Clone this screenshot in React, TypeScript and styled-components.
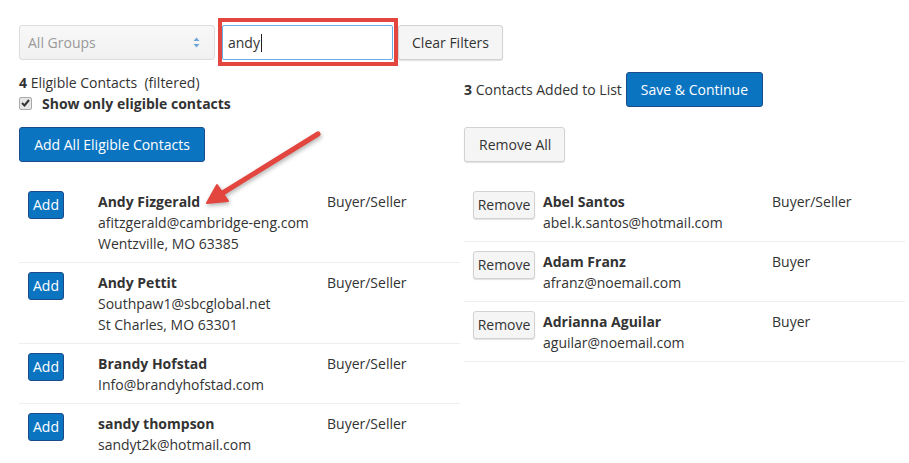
import React from 'react';
import styled, { createGlobalStyle } from 'styled-components';

const GlobalStyle = createGlobalStyle`
    html, body {
        margin: 0;
        padding: 0;
        background: #fff;
    }
    body {
        font-family: "Open Sans", "Liberation Sans", sans-serif;
        font-size: 14px;
        color: #333;
    }
`;

type Contact = {
    name: string;
    lines: string[];
    role: string;
};

const ELIGIBLE: Contact[] = [
    { name: 'Andy Fizgerald', lines: ['afitzgerald@cambridge-eng.com', 'Wentzville, MO 63385'], role: 'Buyer/Seller' },
    { name: 'Andy Pettit', lines: ['Southpaw1@sbcglobal.net', 'St Charles, MO 63301'], role: 'Buyer/Seller' },
    { name: 'Brandy Hofstad', lines: ['Info@brandyhofstad.com'], role: 'Buyer/Seller' },
    { name: 'sandy thompson', lines: ['sandyt2k@hotmail.com'], role: 'Buyer/Seller' },
];

const ADDED: Contact[] = [
    { name: 'Abel Santos', lines: ['abel.k.santos@hotmail.com'], role: 'Buyer/Seller' },
    { name: 'Adam Franz', lines: ['afranz@noemail.com'], role: 'Buyer' },
    { name: 'Adrianna Aguilar', lines: ['aguilar@noemail.com'], role: 'Buyer' },
];

const Page = styled.div`
    position: relative;
    width: 909px;
    height: 463px;
    overflow: hidden;
    padding-top: 25px;
    box-sizing: border-box;
`;

const FilterBar = styled.div`
    display: flex;
    align-items: center;
    padding-left: 19px;
    height: 35px;
`;

const SelectBox = styled.div`
    display: flex;
    align-items: center;
    justify-content: space-between;
    width: 196px;
    height: 35px;
    box-sizing: border-box;
    padding: 0 14px 0 8px;
    border: 1px solid #ddd;
    border-radius: 3px;
    background: linear-gradient(#f8f8f8, #f1f1f1);
    color: #999;
`;

const InputWrap = styled.div`
    position: relative;
    margin-left: 7px;
`;

const SearchInput = styled.div`
    display: flex;
    align-items: center;
    width: 171px;
    height: 35px;
    box-sizing: border-box;
    padding-left: 5px;
    border: 1px solid #66afe9;
    border-radius: 2px;
    background: #fff;
    color: #333;
`;

const Caret = styled.span`
    display: inline-block;
    width: 1px;
    height: 18px;
    background: #222;
    margin-left: 1px;
`;

// red annotation frame drawn over the search box
const Highlight = styled.div`
    position: absolute;
    left: -4px;
    top: -7px;
    width: 180px;
    height: 48px;
    border: 4px solid #e2463f;
    box-sizing: border-box;
    pointer-events: none;
`;

const Button = styled.button<{ $primary?: boolean; $small?: boolean }>`
    font-family: inherit;
    font-size: 14px;
    line-height: 20px;
    box-sizing: border-box;
    height: ${p => (p.$small ? '28px' : '35px')};
    padding: ${p => (p.$small ? '0 4px' : '0 14px')};
    border-radius: 3px;
    border: 1px solid ${p => (p.$primary ? '#1d4a8a' : '#d2d2d2')};
    background: ${p => (p.$primary ? '#0a74c1' : '#f5f5f5')};
    color: ${p => (p.$primary ? '#fff' : '#333')};
    box-shadow: ${p => (p.$primary ? 'none' : '0 1px 1px rgba(0,0,0,0.12)')};
    cursor: pointer;
    white-space: nowrap;
`;

const ClearButton = styled(Button)`
    margin-left: 5px;
    width: 105px;
    padding: 0;
`;

const Columns = styled.div`
    display: grid;
    grid-template-columns: 460px 445px;
`;

const Column = styled.div<{ $left?: boolean }>`
    display: flex;
    flex-direction: column;
    padding-left: ${p => (p.$left ? '19px' : '4px')};
`;

const Header = styled.div`
    height: 67px;
    display: flex;
    flex-direction: column;
`;

const CountLine = styled.div`
    margin-top: 13px;
    line-height: 20px;
`;

const CheckLine = styled.label`
    display: flex;
    align-items: center;
    height: 20px;
    font-weight: 700;
`;

const CheckBox = styled.span`
    display: inline-flex;
    align-items: center;
    justify-content: center;
    width: 11px;
    height: 11px;
    border: 1px solid #aaa;
    border-radius: 2px;
    background: #e6e6e6;
    margin-right: 10px;
`;

const SaveRow = styled.div`
    margin-top: 12px;
    display: flex;
    align-items: center;
    gap: 4px;
`;

const Rows = styled.div`
    margin-top: 20px;
    display: flex;
    flex-direction: column;
`;

const Row = styled.div`
    display: grid;
    grid-template-columns: 70px 229px 1fr;
    padding: 10px 0 8px 9px;
    border-bottom: 1px solid #eee;
    line-height: 21px;
`;

const Action = styled.div`
    margin-top: -1px;
`;

const Info = styled.div`
    display: flex;
    flex-direction: column;
    margin-top: -1px;
`;

const Name = styled.div`
    font-weight: 700;
`;

const Role = styled.div`
    margin-top: -1px;
`;

const AddBtn = styled(Button)`
    width: 36px;
    padding: 0;
`;

const RemoveBtn = styled(Button)`
    width: 62px;
    padding: 0;
`;

const ArrowLayer = styled.svg`
    position: absolute;
    left: 0;
    top: 0;
    pointer-events: none;
    filter: drop-shadow(1px 2px 2px rgba(0, 0, 0, 0.3));
`;

const ContactRow = ({ c, action }: { c: Contact; action: React.ReactNode }) => (
    <Row>
        <Action>{action}</Action>
        <Info>
            <Name>{c.name}</Name>
            {c.lines.map(l => (
                <div key={l}>{l}</div>
            ))}
        </Info>
        <Role>{c.role}</Role>
    </Row>
);

const App = () => {
    return (
        <Page>
            <GlobalStyle />
            <FilterBar>
                <SelectBox>
                    <span>All Groups</span>
                    <svg width="7" height="11" viewBox="0 0 7 11">
                        <path d="M3.5 0.5 L6.5 4 H0.5 Z" fill="#6fa6d6" />
                        <path d="M3.5 10.5 L6.5 7 H0.5 Z" fill="#6fa6d6" />
                    </svg>
                </SelectBox>
                <InputWrap>
                    <SearchInput>
                        andy<Caret />
                    </SearchInput>
                    <Highlight />
                </InputWrap>
                <ClearButton>Clear Filters</ClearButton>
            </FilterBar>

            <Columns>
                <Column $left>
                    <Header>
                        <CountLine>
                            <b>4</b> Eligible Contacts&nbsp; (filtered)
                        </CountLine>
                        <CheckLine>
                            <CheckBox>
                                <svg width="9" height="8" viewBox="0 0 9 8">
                                    <path d="M1 4 L3.5 6.5 L8 1" stroke="#333" strokeWidth="2" fill="none" />
                                </svg>
                            </CheckBox>
                            Show only eligible contacts
                        </CheckLine>
                    </Header>
                    <div>
                        <Button $primary style={{ width: 186 }}>Add All Eligible Contacts</Button>
                    </div>
                    <Rows>
                        {ELIGIBLE.map(c => (
                            <ContactRow key={c.name} c={c} action={<AddBtn $primary $small>Add</AddBtn>} />
                        ))}
                    </Rows>
                </Column>

                <Column>
                    <Header>
                        <SaveRow>
                            <span><b>3</b> Contacts Added to List</span>
                            <Button $primary style={{ width: 137 }}>Save &amp; Continue</Button>
                        </SaveRow>
                    </Header>
                    <div>
                        <Button style={{ width: 101 }}>Remove All</Button>
                    </div>
                    <Rows>
                        {ADDED.map(c => (
                            <ContactRow key={c.name} c={c} action={<RemoveBtn $small>Remove</RemoveBtn>} />
                        ))}
                    </Rows>
                </Column>
            </Columns>

            <ArrowLayer width="909" height="463">
                <line x1="318" y1="134" x2="221" y2="194" stroke="#e2463f" strokeWidth="5" strokeLinecap="round" />
                <path d="M207 203 L217 185 L228 201 Z" fill="#e2463f" stroke="#e2463f" strokeWidth="2" strokeLinejoin="round" />
            </ArrowLayer>
        </Page>
    );
};

export default App;
